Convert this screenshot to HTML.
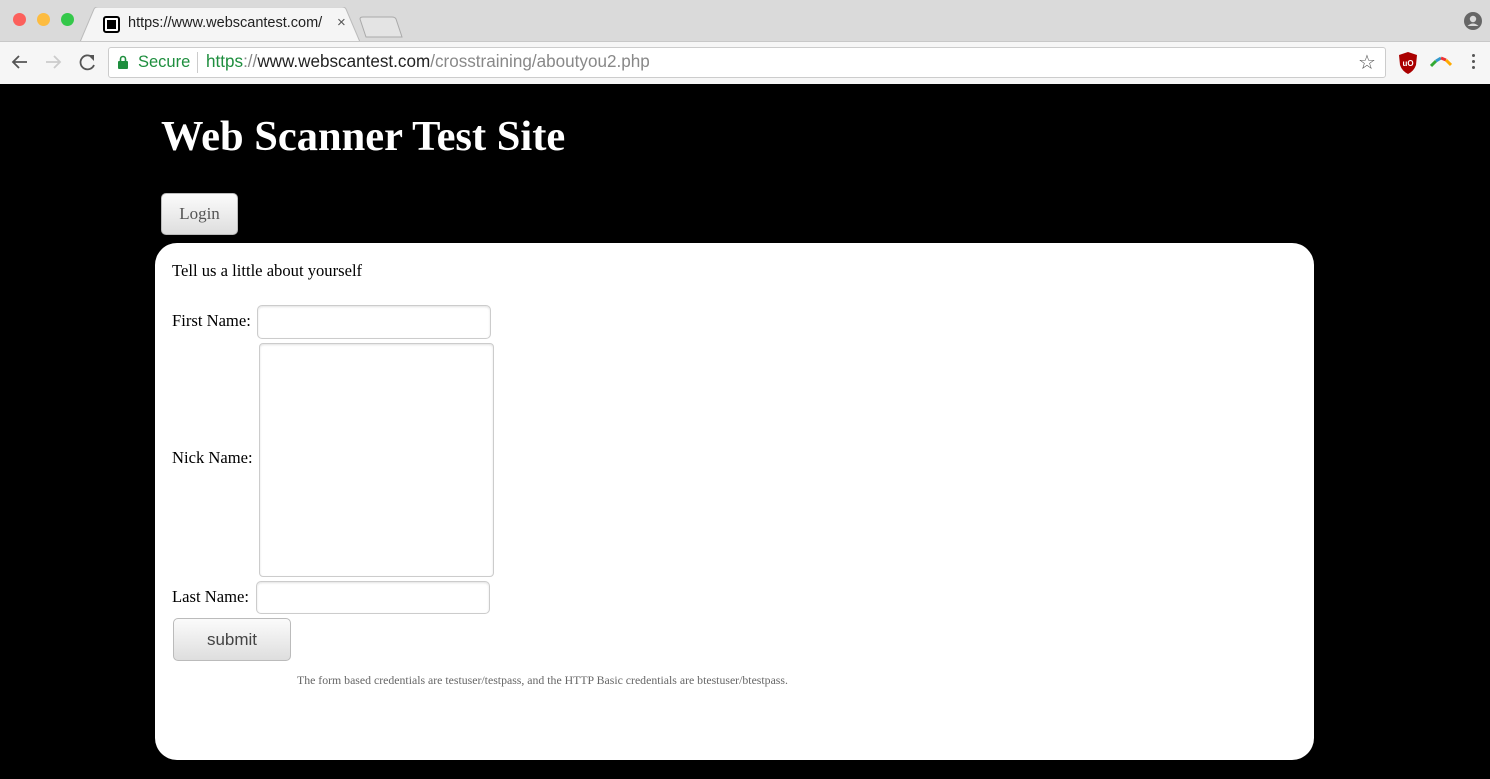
<!DOCTYPE html>
<html><head><style>
*{margin:0;padding:0;box-sizing:border-box}
body{width:1490px;height:779px;overflow:hidden;background:#000;position:relative;font-family:"Liberation Serif",serif}
.a{position:absolute}
.inp{position:absolute;background:#fff;border:1px solid #ccc;border-radius:5px;box-shadow:inset 0 1px 2px rgba(0,0,0,.12)}
.btn{position:absolute;border:1px solid #bbb;border-radius:5px;background:linear-gradient(#fbfbfb,#dedede);color:#555;text-align:center}
.lbl{position:absolute;font-size:16.6px;color:#000;white-space:nowrap}
</style></head><body>
<div class="a" style="left:0;top:0;width:1490px;height:42px;background:#dadada"></div>
<div class="a" style="left:13px;top:13px;width:13px;height:13px;border-radius:50%;background:#fc605c"></div>
<div class="a" style="left:37px;top:13px;width:13px;height:13px;border-radius:50%;background:#fdbc40"></div>
<div class="a" style="left:61px;top:13px;width:13px;height:13px;border-radius:50%;background:#34c84a"></div>
<svg class="a" style="left:80px;top:7px" width="330" height="36"><path d="M0 35 L14 2 Q15 0 18 0 L262 0 Q265 0 266 2 L280 35 Z" fill="#f5f5f5" stroke="#bbb"/><path d="M286 30 L280 12 Q280 10 283 10 L312 10 Q315 10 316 12 L322 30 Z" fill="#e4e4e4" stroke="#aaa"/></svg>
<div class="a" style="left:103px;top:16px;width:17px;height:17px;border:2px solid #000;border-radius:3px;background:#fff"><div style="margin:2px;width:9px;height:9px;background:#000"></div></div>
<div class="a" style="left:128px;top:15px;font:14.5px 'Liberation Sans',sans-serif;color:#222;width:205px;overflow:hidden;white-space:nowrap">https://www.webscantest.com/</div>
<div class="a" style="left:337px;top:14px;font:15px 'Liberation Sans',sans-serif;color:#555">×</div>
<svg class="a" style="left:1463px;top:11px" width="20" height="20"><circle cx="10" cy="10" r="9" fill="#666"/><circle cx="10" cy="8" r="3.2" fill="#dadada"/><path d="M4.5 15 Q10 10 15.5 15" fill="#dadada"/></svg>
<div class="a" style="left:0;top:41px;width:1490px;height:43px;background:#f6f6f6;border-top:1px solid #c8c8c8"></div>
<svg class="a" style="left:10px;top:53px" width="100" height="20"><path d="M17 9H3M9 3L3 9L9 15" fill="none" stroke="#555" stroke-width="1.8"/><path d="M36 9H50M44 3L50 9L44 15" fill="none" stroke="#ccc" stroke-width="1.8"/><path d="M82 4A7 7 0 1 0 84 12" fill="none" stroke="#555" stroke-width="1.8"/><path d="M78 2L84 2L84 8Z" fill="#555"/></svg>
<div class="a" style="left:108px;top:47px;width:1278px;height:31px;background:#fff;border:1px solid #ccc;border-radius:3px"></div>
<svg class="a" style="left:118px;top:55px" width="10" height="14"><rect x="0" y="6" width="10" height="8" rx="1" fill="#1e8e3e"/><path d="M2.5 6V4a2.5 2.5 0 0 1 5 0v2" fill="none" stroke="#1e8e3e" stroke-width="1.6"/></svg>
<div class="a" style="left:138px;top:53px;font:16.5px 'Liberation Sans',sans-serif;color:#1e8e3e">Secure</div>
<div class="a" style="left:197px;top:52px;width:1px;height:21px;background:#ccc"></div>
<div class="a" style="left:206px;top:52px;font:17.1px 'Liberation Sans',sans-serif;color:#888;white-space:nowrap"><span style="color:#1e8e3e">https</span>://<span style="color:#222">www.webscantest.com</span>/crosstraining/aboutyou2.php</div>
<div class="a" style="left:1358px;top:50px;font:20px 'DejaVu Sans',sans-serif;color:#555">☆</div>
<svg class="a" style="left:1398px;top:52px" width="20" height="22"><path d="M1 3 L10 0 L19 3 L18 13 Q16 19 10 22 Q4 19 2 13 Z" fill="#a00"/><text x="10" y="14" font-size="8" fill="#fff" text-anchor="middle" font-family="Liberation Sans" font-weight="bold">uO</text></svg>
<svg class="a" style="left:1430px;top:56px" width="22" height="12"><path d="M1 10 L6 5" stroke="#3a3" stroke-width="3"/><path d="M6 5 L11 2" stroke="#39c" stroke-width="3"/><path d="M11 2 L16 4" stroke="#e33" stroke-width="3"/><path d="M16 4 L21 9" stroke="#fa0" stroke-width="3"/></svg>
<div class="a" style="left:1472px;top:54px;width:3px;height:3px;border-radius:50%;background:#555;box-shadow:0 6px 0 #555,0 12px 0 #555"></div>

<div class="a" style="left:161px;top:112px;font:bold 42.5px 'Liberation Serif',serif;color:#fff;white-space:nowrap">Web Scanner Test Site</div>
<div class="btn" style="left:161px;top:193px;width:77px;height:42px;font:17px 'Liberation Serif',serif;line-height:40px">Login</div>
<div class="a" style="left:155px;top:243px;width:1159px;height:517px;background:#fff;border-radius:22px"></div>
<div class="lbl" style="left:172px;top:261px">Tell us a little about yourself</div>
<div class="lbl" style="left:172px;top:311px">First Name:</div>
<div class="inp" style="left:257px;top:305px;width:234px;height:34px"></div>
<div class="lbl" style="left:172px;top:448px">Nick Name:</div>
<div class="inp" style="left:259px;top:343px;width:235px;height:234px;border-radius:4px"></div>
<div class="lbl" style="left:172px;top:587px">Last Name:</div>
<div class="inp" style="left:256px;top:581px;width:234px;height:33px"></div>
<div class="btn" style="left:173px;top:618px;width:118px;height:43px;font:17px 'Liberation Sans',sans-serif;line-height:41px;color:#444">submit</div>
<div class="a" style="left:297px;top:673px;font:11.8px 'Liberation Serif',serif;color:#666;white-space:nowrap">The form based credentials are testuser/testpass, and the HTTP Basic credentials are btestuser/btestpass.</div>
</body></html>
